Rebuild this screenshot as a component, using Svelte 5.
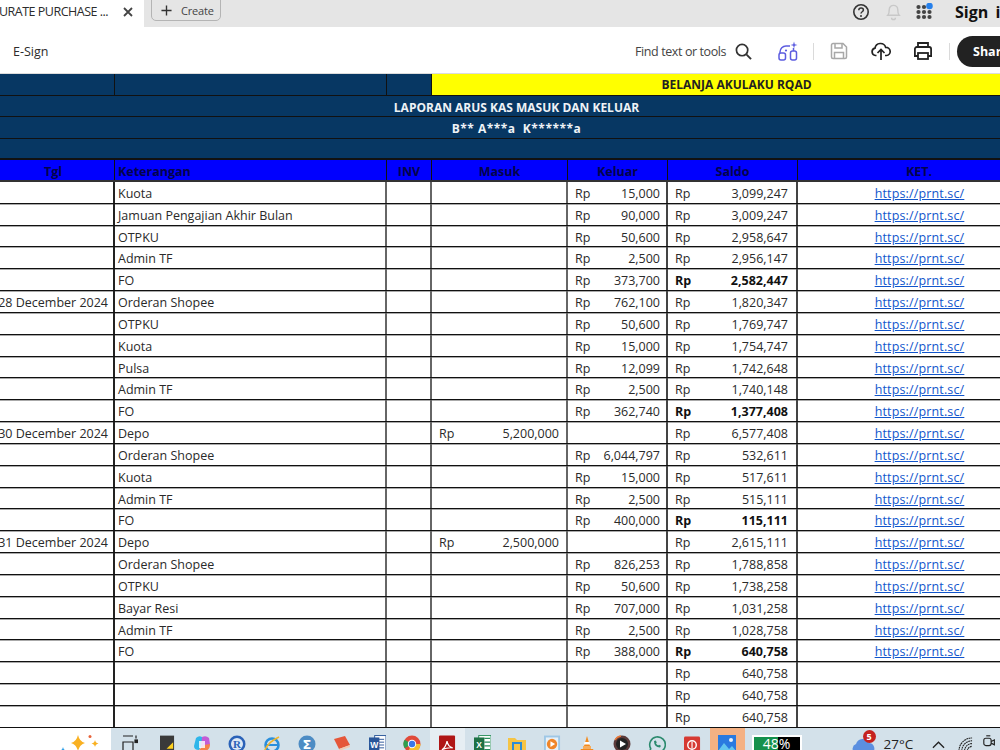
<script lang="ts">
  type Row = { tgl?: string; ket?: string; masuk?: string; keluar?: string; saldo: string; bold?: boolean; link?: boolean };

  const rows: Row[] = [
    { ket: "Kuota", keluar: "15,000", saldo: "3,099,247", link: true },
    { ket: "Jamuan Pengajian Akhir Bulan", keluar: "90,000", saldo: "3,009,247", link: true },
    { ket: "OTPKU", keluar: "50,600", saldo: "2,958,647", link: true },
    { ket: "Admin TF", keluar: "2,500", saldo: "2,956,147", link: true },
    { ket: "FO", keluar: "373,700", saldo: "2,582,447", bold: true, link: true },
    { tgl: "28 December 2024", ket: "Orderan Shopee", keluar: "762,100", saldo: "1,820,347", link: true },
    { ket: "OTPKU", keluar: "50,600", saldo: "1,769,747", link: true },
    { ket: "Kuota", keluar: "15,000", saldo: "1,754,747", link: true },
    { ket: "Pulsa", keluar: "12,099", saldo: "1,742,648", link: true },
    { ket: "Admin TF", keluar: "2,500", saldo: "1,740,148", link: true },
    { ket: "FO", keluar: "362,740", saldo: "1,377,408", bold: true, link: true },
    { tgl: "30 December 2024", ket: "Depo", masuk: "5,200,000", saldo: "6,577,408", link: true },
    { ket: "Orderan Shopee", keluar: "6,044,797", saldo: "532,611", link: true },
    { ket: "Kuota", keluar: "15,000", saldo: "517,611", link: true },
    { ket: "Admin TF", keluar: "2,500", saldo: "515,111", link: true },
    { ket: "FO", keluar: "400,000", saldo: "115,111", bold: true, link: true },
    { tgl: "31 December 2024", ket: "Depo", masuk: "2,500,000", saldo: "2,615,111", link: true },
    { ket: "Orderan Shopee", keluar: "826,253", saldo: "1,788,858", link: true },
    { ket: "OTPKU", keluar: "50,600", saldo: "1,738,258", link: true },
    { ket: "Bayar Resi", keluar: "707,000", saldo: "1,031,258", link: true },
    { ket: "Admin TF", keluar: "2,500", saldo: "1,028,758", link: true },
    { ket: "FO", keluar: "388,000", saldo: "640,758", bold: true, link: true },
    { saldo: "640,758" },
    { saldo: "640,758" },
    { saldo: "640,758" }
  ];
</script>

<div class="screen">
  <header class="tabbar">
    <div class="tab">
      <span class="tab-title">URATE PURCHASE ...</span>
      <svg class="tab-close" viewBox="0 0 10 10" width="10" height="10"><path d="M1 1l8 8M9 1l-8 8" stroke="#444" stroke-width="1.8" fill="none"/></svg>
    </div>
    <div class="create">
      <svg viewBox="0 0 12 12" width="11" height="11"><path d="M6 .5v11M.5 6h11" stroke="#333" stroke-width="1.5"/></svg>
      <span>Create</span>
    </div>
    <div class="account">
      <svg viewBox="0 0 18 18" width="18" height="18"><circle cx="9" cy="9" r="7.2" fill="none" stroke="#333" stroke-width="1.6"/><path d="M6.8 7.2c0-3 4.6-2.800 4.600-.2 0 1.800-2.400 1.700-2.400 3.500" fill="none" stroke="#333" stroke-width="1.5"/><circle cx="9" cy="13" r="1" fill="#333"/></svg>
      <svg class="bell" viewBox="0 0 18 20" width="17" height="19"><path d="M3 14c1.500-1.500 1.500-3 1.500-6a4.500 4.500 0 0 1 9 0c0 3 0 4.500 1.500 6zM7 16.500a2 2 0 0 0 4 0" fill="none" stroke="#c8c8c8" stroke-width="1.500"/></svg>
      <svg class="apps" viewBox="0 0 18 18" width="18" height="18">
        {#each [0, 1, 2] as r}
          {#each [0, 1, 2] as c}
            <circle cx={2.500 + c * 5.500} cy={4 + r * 5} r="2.100" fill="#444"/>
          {/each}
        {/each}
        <circle cx="13.500" cy="3" r="3.300" fill="#2680eb"/>
      </svg>
      <span class="signin">Sign in</span>
    </div>
  </header>

  <div class="toolbar">
    <span class="esign">E-Sign</span>
    <div class="tools">
      <span class="find">Find text or tools</span>
      <svg class="search" viewBox="0 0 18 18" width="17" height="17"><circle cx="7.500" cy="7.500" r="6" fill="none" stroke="#333" stroke-width="1.800"/><path d="M12 12l5 5" stroke="#333" stroke-width="2"/></svg>
      <svg class="magic" viewBox="0 0 20 20" width="20" height="20" fill="none" stroke="#5c5ce0" stroke-width="1.500"><path d="M2 12v-1a6 6 0 0 1 6-6h4"/><rect x="1" y="12" width="6.500" height="7" rx="2"/><rect x="12.500" y="10" width="6" height="9" rx="2"/><path d="M15.500 10v-3"/><circle cx="8" cy="9.500" r="1.100" fill="#5c5ce0" stroke="none"/><path d="M16 .5l.8 2.700 2.700.8-2.700.8-.8 2.700-.8-2.700-2.700-.8 2.700-.8z" fill="#5c5ce0" stroke="none"/></svg>
      <i class="sep"></i>
      <svg class="save" viewBox="0 0 18 18" width="18" height="18" fill="none" stroke="#a8a8a8" stroke-width="1.500"><path d="M1.500 3a1.500 1.500 0 0 1 1.500-1.500h10l3.500 3.500v10a1.500 1.500 0 0 1-1.500 1.500h-12a1.500 1.500 0 0 1-1.500-1.500z"/><path d="M5 1.500v4.500h7v-4.500M4.500 16.500v-6h9v6"/></svg>
      <svg class="upload" viewBox="0 0 20 20" width="20" height="20" fill="none" stroke="#222" stroke-width="1.700"><path d="M5.500 14.500h-1a3.700 3.700 0 0 1-.5-7.300 5.500 5.500 0 0 1 10.700-.8 4 4 0 0 1 .8 8.100h-1.500"/><path d="M10 19v-10M6.500 12l3.500-3.500 3.500 3.500"/></svg>
      <svg class="print" viewBox="0 0 20 20" width="20" height="20" fill="none" stroke="#222" stroke-width="1.800"><path d="M5 6v-4h10v4M5 15h-3.100v-7a2 2 0 0 1 2-2h12.200a2 2 0 0 1 2 2v7h-3.100"/><rect x="5" y="12" width="10" height="6"/></svg>
      <i class="sep"></i>
      <div class="share">Share</div>
    </div>
  </div>

  <main class="sheet">
    <div class="grid head-row">
      <div class="navy"></div>
      <div class="navy"></div>
      <div class="navy"></div>
      <div class="yellow">BELANJA AKULAKU RQAD</div>
    </div>
    <div class="banner">LAPORAN ARUS KAS MASUK DAN KELUAR</div>
    <div class="banner owner">B** A***a&nbsp; K******a</div>
    <div class="banner"></div>
    <div class="grid titles">
      <div class="c">Tgl</div>
      <div class="ket">Keterangan</div>
      <div class="c">INV</div>
      <div class="c">Masuk</div>
      <div class="c">Keluar</div>
      <div class="c">Saldo</div>
      <div class="c">KET.</div>
    </div>
    {#each rows as row}
      <div class="grid row">
        <div class="tgl">{row.tgl ?? ""}</div>
        <div class="ket">{row.ket ?? ""}</div>
        <div></div>
        <div class="money masuk">
          {#if row.masuk}<span>Rp</span><span>{row.masuk}</span>{/if}
        </div>
        <div class="money keluar">
          {#if row.keluar}<span>Rp</span><span>{row.keluar}</span>{/if}
        </div>
        <div class="money saldo" class:bold={row.bold}><span>Rp</span><span>{row.saldo}</span></div>
        <div class="c">
          {#if row.link}<span class="link">https://prnt.sc/</span>{/if}
        </div>
      </div>
    {/each}
  </main>

  <footer class="taskbar">
    <div class="searchbox">
      <svg viewBox="0 0 44 22" width="44" height="22">
        <path d="M19 1q1.500 6.500 7 8-5.500 1.500-7 8-1.500-6.500-7-8 5.500-1.500 7-8z" fill="#f9b122"/>
        <circle cx="31" cy="2.500" r="1.500" fill="#e8633a"/>
        <path d="M36 6q.5 3 3.500 3.500-3 .5-3.500 3.500-.5-3-3.500-3.500 3-.5 3.500-3.500z" fill="#f9b122"/>
        <path d="M4 13q.5 3 3 3.500-2.500.5-3 3.500-.5-3-3-3.500 2.500-.5 3-3.500z" fill="#2f9fe8"/>
      </svg>
    </div>
    <div class="slot first">
      <svg viewBox="0 0 16 20" width="16" height="20" fill="none" stroke="#222" stroke-width="1.200"><path d="M1 1h10M1 7h10v10h-10zM14 .5v3"/><rect x="13" y="5" width="2.500" height="2.500" fill="#222"/></svg>
    </div>
    <div class="slot"><svg viewBox="0 0 16 20" width="15" height="20"><rect width="15" height="20" fill="#3a3a3a"/><path d="M14 7v7h-7z" fill="#ffd21e"/></svg></div>
    <div class="slot"><svg viewBox="0 0 18 20" width="18" height="20"><path d="M3 3q3-3 6-1l2 4-5 9q-5 0-5-4z" fill="#2fb6ea"/><path d="M9 2q4-2 7 1l1 6q-1 4-6 6l-3-3z" fill="#c35cd6"/><path d="M6 15l5-5 6-1q0 6-5 7z" fill="#f5824a"/><rect x="6" y="6" width="6" height="7" fill="#fff" opacity=".8"/></svg></div>
    <div class="slot"><svg viewBox="0 0 18 20" width="18" height="20"><circle cx="9" cy="9" r="8.500" fill="#2a62b8"/><circle cx="9" cy="9" r="6" fill="#dce8f6"/><text x="9" y="13" text-anchor="middle" class="rglyph">R</text></svg></div>
    <div class="slot"><svg viewBox="0 0 18 20" width="18" height="20"><circle cx="9" cy="10" r="6.500" fill="none" stroke="#2a8fdc" stroke-width="2.500"/><path d="M3 10h12" stroke="#2a8fdc" stroke-width="2"/><path d="M1 18q2-10 15-16" fill="none" stroke="#f2b52a" stroke-width="1.500"/></svg></div>
    <div class="slot"><svg viewBox="0 0 18 20" width="18" height="20"><circle cx="9" cy="9" r="8.500" fill="#4d8cc4"/><text x="9" y="14" text-anchor="middle" class="sigma">Σ</text></svg></div>
    <div class="slot"><svg viewBox="0 0 18 20" width="18" height="20"><path d="M1 4l11-3 5 9-11 4z" fill="#e5573a"/><path d="M6 14l11-4v2l-11 4z" fill="#f2c9b0"/></svg></div>
    <div class="slot"><svg viewBox="0 0 18 20" width="17" height="20"><rect x="6" y="0" width="12" height="20" fill="#fff" stroke="#2a5699"/><path d="M9 4h7M9 7h7M9 10h7M9 13h7" stroke="#2a5699"/><rect y="2" width="11" height="14" fill="#2a5699"/><text x="5.500" y="13" text-anchor="middle" class="word">W</text></svg></div>
    <div class="slot"><svg viewBox="0 0 18 18" width="18" height="18"><circle cx="9" cy="9" r="8.500" fill="#e04a3a"/><path d="M9 9l-7.400 4.300a8.500 8.500 0 0 1 0-8.600z" fill="#2f9e4f"/><path d="M9 9h8.500a8.500 8.500 0 0 1-12.500 7.500z" fill="#f6c02c"/><circle cx="9" cy="9" r="4.200" fill="#fff"/><circle cx="9" cy="9" r="3.200" fill="#3b78e7"/></svg></div>
    <div class="slot lit"><svg viewBox="0 0 18 20" width="17" height="20"><rect width="17" height="20" rx="1" fill="#b01616"/><path d="M3 15q4-2 5.500-9 1 6 6 7-6-.5-11.500 2z" fill="none" stroke="#fff" stroke-width="1.300"/></svg></div>
    <div class="slot"><svg viewBox="0 0 18 20" width="17" height="20"><rect x="5" y="0" width="13" height="20" fill="#fff" stroke="#2a8f5c"/><path d="M11 3h6M11 7h6M11 11h6M11 15h6" stroke="#2a8f5c" stroke-width="1.300"/><rect y="2" width="11" height="15" fill="#1e7145"/><text x="5.500" y="13.500" text-anchor="middle" class="word">X</text></svg></div>
    <div class="slot"><svg viewBox="0 0 18 20" width="18" height="20"><path d="M0 3h7l2 2h9v15h-18z" fill="#f5c445"/><rect x="5" y="8" width="8" height="8" fill="none" stroke="#2a8cd6" stroke-width="2"/></svg></div>
    <div class="slot"><svg viewBox="0 0 18 20" width="17" height="20"><rect width="17" height="20" fill="#9ec7e6"/><rect x="2" y="2" width="13" height="16" fill="#e7f1f8"/><circle cx="8.500" cy="9" r="5.500" fill="#f0862a"/><path d="M6.800 6v6l5-3z" fill="#fff"/></svg></div>
    <div class="slot"><svg viewBox="0 0 18 20" width="18" height="20"><path d="M9 1l3 10h-6z" fill="#f28a1e"/><path d="M6.500 7h5l.7 2.500h-6.400z" fill="#fff"/><path d="M3 14h12l2 4h-16z" fill="#f28a1e"/><rect x="5" y="11" width="8" height="3" fill="#f6ad5e"/></svg></div>
    <div class="slot"><svg viewBox="0 0 18 18" width="18" height="18"><circle cx="9" cy="9" r="8.500" fill="#5a3a3a"/><circle cx="9" cy="9" r="6" fill="#222"/><path d="M7 5.500v7l6-3.500z" fill="#fff"/><path d="M2 5a8 8 0 0 1 6-4" stroke="#e8793a" stroke-width="1.500" fill="none"/></svg></div>
    <div class="slot"><svg viewBox="0 0 18 20" width="18" height="20" fill="none" stroke="#2b8a6e" stroke-width="1.600"><path d="M1.500 18l1.200-4.500a7.800 7.800 0 1 1 3 3z"/><path d="M6 6q0 6 6 6.500l1-1.800-2-1-.8.800q-1.700-.8-2.200-2.300l.8-.8-1-2z" fill="#2b8a6e" stroke="none"/></svg></div>
    <div class="slot"><svg viewBox="0 0 18 20" width="17" height="20"><rect y="1" width="17" height="19" rx="1.500" fill="#d63a32"/><circle cx="8.500" cy="10" r="4.500" fill="none" stroke="#fff" stroke-width="1.500"/><path d="M8.500 6.500v7" stroke="#fff" stroke-width="1.200"/></svg></div>
    <div class="slot active"><svg viewBox="0 0 18 20" width="18" height="20"><rect width="18" height="20" fill="#2a7ae0"/><circle cx="13" cy="5" r="2" fill="#e8f0fa"/><path d="M0 16l6-8 5 6 3-3 4 5v4h-18z" fill="#63c6ef"/></svg></div>

    <div class="battery"><div class="meter"><span>48%</span></div></div>

    <div class="tray">
      <div class="weather">
        <svg viewBox="0 0 24 16" width="24" height="16"><path d="M3 16a5 5 0 0 1 1-9 7 7 0 0 1 13-1 5.500 5.500 0 0 1 3 10z" fill="#5b8fe0"/></svg>
        <span class="badge">5</span>
      </div>
      <span class="temp">27°C</span>
      <svg class="chev" viewBox="0 0 14 8" width="13" height="8"><path d="M1 7l6-6 6 6" fill="none" stroke="#222" stroke-width="1.400"/></svg>
      <svg class="wifi" viewBox="0 0 16 16" width="15" height="15" fill="none" stroke="#222" stroke-width="1.200"><path d="M1 15a14 14 0 0 1 14-14M4 15a11 11 0 0 1 11-11M7 15a8 8 0 0 1 8-8M10 15a5 5 0 0 1 5-5" stroke-dasharray="2 .6"/></svg>
      <svg class="cam" viewBox="0 0 16 16" width="13" height="13" fill="none" stroke="#222" stroke-width="1.400"><path d="M4 1h5"/><rect x="1" y="4" width="9" height="9" rx="2.500"/><path d="M10 8l4-2v6l-4-2"/></svg>
    </div>
  </footer>
</div>

<style>
  :global(body) {
    margin: 0;
    background: #fff;
    font-family: "Open Sans", "Noto Sans", sans-serif;
  }

  .screen {
    width: 1000px;
    height: 750px;
    overflow: hidden;
    display: flex;
    flex-direction: column;
  }

  /* browser-ish tab strip */
  .tabbar {
    height: 27px;
    flex: none;
    display: flex;
    align-items: flex-start;
    background: #e5e5e5;
  }

  .tab {
    width: 144px;
    height: 27px;
    flex: none;
    box-sizing: border-box;
    padding-bottom: 4px;
    background: #fff;
    display: flex;
    align-items: center;
    overflow: hidden;
    font-size: 12.5px;
    letter-spacing: -0.5px;
    color: #2c2c2c;
  }

  .tab-title {
    white-space: nowrap;
    margin-left: -1px;
    width: 124px;
    flex: none;
  }

  .tab-close {
    flex: none;
  }

  .create {
    margin-left: 7px;
    width: 70px;
    height: 22px;
    margin-top: -1px;
    box-sizing: border-box;
    display: flex;
    align-items: center;
    gap: 9px;
    padding-left: 9px;
    border: 1px solid #b4b4b4;
    border-radius: 0 0 5px 5px;
    font-size: 11px;
    letter-spacing: -0.2px;
    color: #444;
  }

  .account {
    margin-left: auto;
    height: 23px;
    display: flex;
    align-items: center;
    width: 148px;
    flex: none;
    overflow: hidden;
  }

  .account svg {
    flex: none;
  }

  .bell {
    margin-left: 15px;
  }

  .apps {
    margin-left: 14px;
  }

  .signin {
    margin-left: 21px;
    font-size: 16px;
    font-weight: 700;
    color: #111;
    white-space: nowrap;
    word-spacing: 3px;
  }

  .toolbar {
    height: 47px;
    flex: none;
    box-sizing: border-box;
    padding-top: 2px;
    border-bottom: 1px solid #dcdcdc;
    display: flex;
    align-items: center;
    background: #fff;
    overflow: hidden;
  }

  .esign {
    margin-left: 13px;
    font-size: 12.5px;
    color: #2c2c2c;
  }

  .tools {
    margin-left: auto;
    width: 365px;
    flex: none;
    display: flex;
    align-items: center;
  }

  .find {
    font-size: 12.5px;
    letter-spacing: -0.4px;
    color: #444;
    white-space: nowrap;
    width: 100px;
    flex: none;
  }

  .search {
    flex: none;
  }

  .magic {
    margin-left: 26px;
    flex: none;
  }

  .sep {
    width: 1px;
    height: 17px;
    background: #dadada;
    flex: none;
    margin-left: 15px;
  }

  .save {
    margin-left: 16px;
    flex: none;
  }

  .upload {
    margin-left: 23px;
    flex: none;
  }

  .print {
    margin-left: 22px;
    flex: none;
  }

  .print + .sep {
    margin-left: 16px;
  }

  .share {
    margin-left: 7px;
    width: 90px;
    flex: none;
    height: 31px;
    border-radius: 16px;
    background: #222;
    color: #fff;
    font-size: 12.5px;
    font-weight: 700;
    line-height: 31px;
    padding-left: 16px;
    box-sizing: border-box;
  }

  /* spreadsheet */
  .sheet {
    height: 654px;
    flex: none;
    overflow: hidden;
    font-size: 12.5px;
    color: #2a2a2a;
  }

  .grid {
    display: grid;
    grid-template-columns: 123px 272px 45px 136px 100px 130px 243px;
    grid-template-rows: minmax(0, 1fr);
    width: 1049px;
    margin-left: -8px;
  }

  .head-row {
    height: 21.6px;
    grid-template-columns: 123px 272px 45px 609px;
    box-sizing: border-box;
    border-bottom: 1px solid #111;
  }

  .navy {
    background: #073763;
    border-right: 1px solid #111;
  }

  .yellow {
    background: #ff0;
    text-align: center;
    font-weight: 700;
    font-size: 12px;
    color: #222;
    line-height: 22px;
    overflow: hidden;
    border-left: 1px solid #111;
    margin-left: -1px;
  }

  .banner {
    height: 21.6px;
    box-sizing: border-box;
    width: 1049px;
    margin-left: -8px;
    background: #073763;
    border-bottom: 1px solid #111;
    color: #eef2f6;
    font-size: 12px;
    font-weight: 700;
    text-align: center;
    line-height: 23px;
    padding-right: 0;
  }

  .owner {
    letter-spacing: 0.5px;
  }

  .banner:nth-child(4) {
    border-bottom: 2px solid #111;
  }

  .titles {
    height: 21.6px;
    box-sizing: border-box;
    background: #00f;
    border-bottom: 2px solid #333;
    font-weight: 700;
    font-size: 12.5px;
    color: #04044a;
    line-height: 23px;
  }

  .titles > div {
    border-right: 1px solid #111;
  }

  .row {
    height: 21.83px;
    box-sizing: border-box;
    border-bottom: 1px solid #111;
    box-shadow: 0 1px 0 #aaa;
    line-height: 24.5px;
  }

  .row > div {
    border-right: 2px solid #666;
    white-space: nowrap;
    overflow: hidden;
  }

  .row > div:first-child {
    border-right: 2px solid #222;
  }

  .row > div:nth-child(5),
  .row > div:nth-child(6) {
    border-right-color: #444;
  }

  .tgl {
    text-align: right;
    padding-right: 5px;
  }

  .ket {
    padding-left: 3px;
  }

  .c {
    text-align: center;
  }

  .money {
    display: flex;
    justify-content: space-between;
  }

  .masuk {
    padding: 0 7px;
  }

  .keluar {
    padding: 0 6px 0 7px;
  }

  .saldo {
    padding: 0 8px 0 7px;
  }

  .bold {
    font-weight: 700;
    color: #111;
  }

  .link {
    color: #1155cc;
    text-decoration: underline;
    letter-spacing: 0.15px;
    margin-left: 2px;
  }

  /* windows taskbar */
  .taskbar {
    height: 22px;
    flex: none;
    display: flex;
    background: #d3e1ea;
    overflow: hidden;
  }

  .searchbox {
    width: 111px;
    flex: none;
    background: #fff;
    box-sizing: border-box;
    padding: 6px 0 0 59px;
  }

  .slot {
    width: 35px;
    flex: none;
    box-sizing: border-box;
    display: flex;
    justify-content: center;
    align-items: flex-start;
    padding-top: 7px;
  }

  .slot.first {
    width: 38.5px;
  }

  .slot.lit {
    background: #e6eef3;
  }

  .slot.active {
    background: #f4b183;
  }

  .rglyph {
    font: 700 11px "Liberation Serif", serif;
    fill: #2a62b8;
  }

  .sigma {
    font: 700 13px "DejaVu Sans", sans-serif;
    fill: #fff;
  }

  .word {
    font: 700 9px "Liberation Sans", sans-serif;
    fill: #fff;
  }

  .battery {
    margin: 7px 0 0 7px;
    width: 50px;
    flex: none;
    box-sizing: border-box;
    background: #fff;
    padding: 2px 2px 0;
  }

  .meter {
    height: 20px;
    background: linear-gradient(90deg, #15904c 0 52%, #000 52% 100%);
    color: #fff;
    font-size: 14px;
    line-height: 13px;
    text-align: center;
  }

  .tray {
    margin-left: 50px;
    display: flex;
    align-items: flex-start;
    flex: none;
  }

  .weather {
    position: relative;
    width: 24px;
    padding-top: 9px;
    flex: none;
  }

  .weather svg {
    display: block;
  }

  .badge {
    position: absolute;
    left: 11px;
    top: 2px;
    width: 13px;
    height: 13px;
    border-radius: 50%;
    background: #c5221f;
    color: #fff;
    font-size: 9px;
    font-weight: 700;
    line-height: 13px;
    text-align: center;
  }

  .temp {
    margin-left: 8px;
    font-size: 13.5px;
    line-height: 20px;
    padding-top: 6px;
    color: #222;
    white-space: nowrap;
  }

  .chev {
    margin: 13px 0 0 19px;
    flex: none;
  }

  .wifi {
    margin: 9px 0 0 13px;
    flex: none;
  }

  .cam {
    margin: 7px 0 0 10px;
    flex: none;
  }
</style>
